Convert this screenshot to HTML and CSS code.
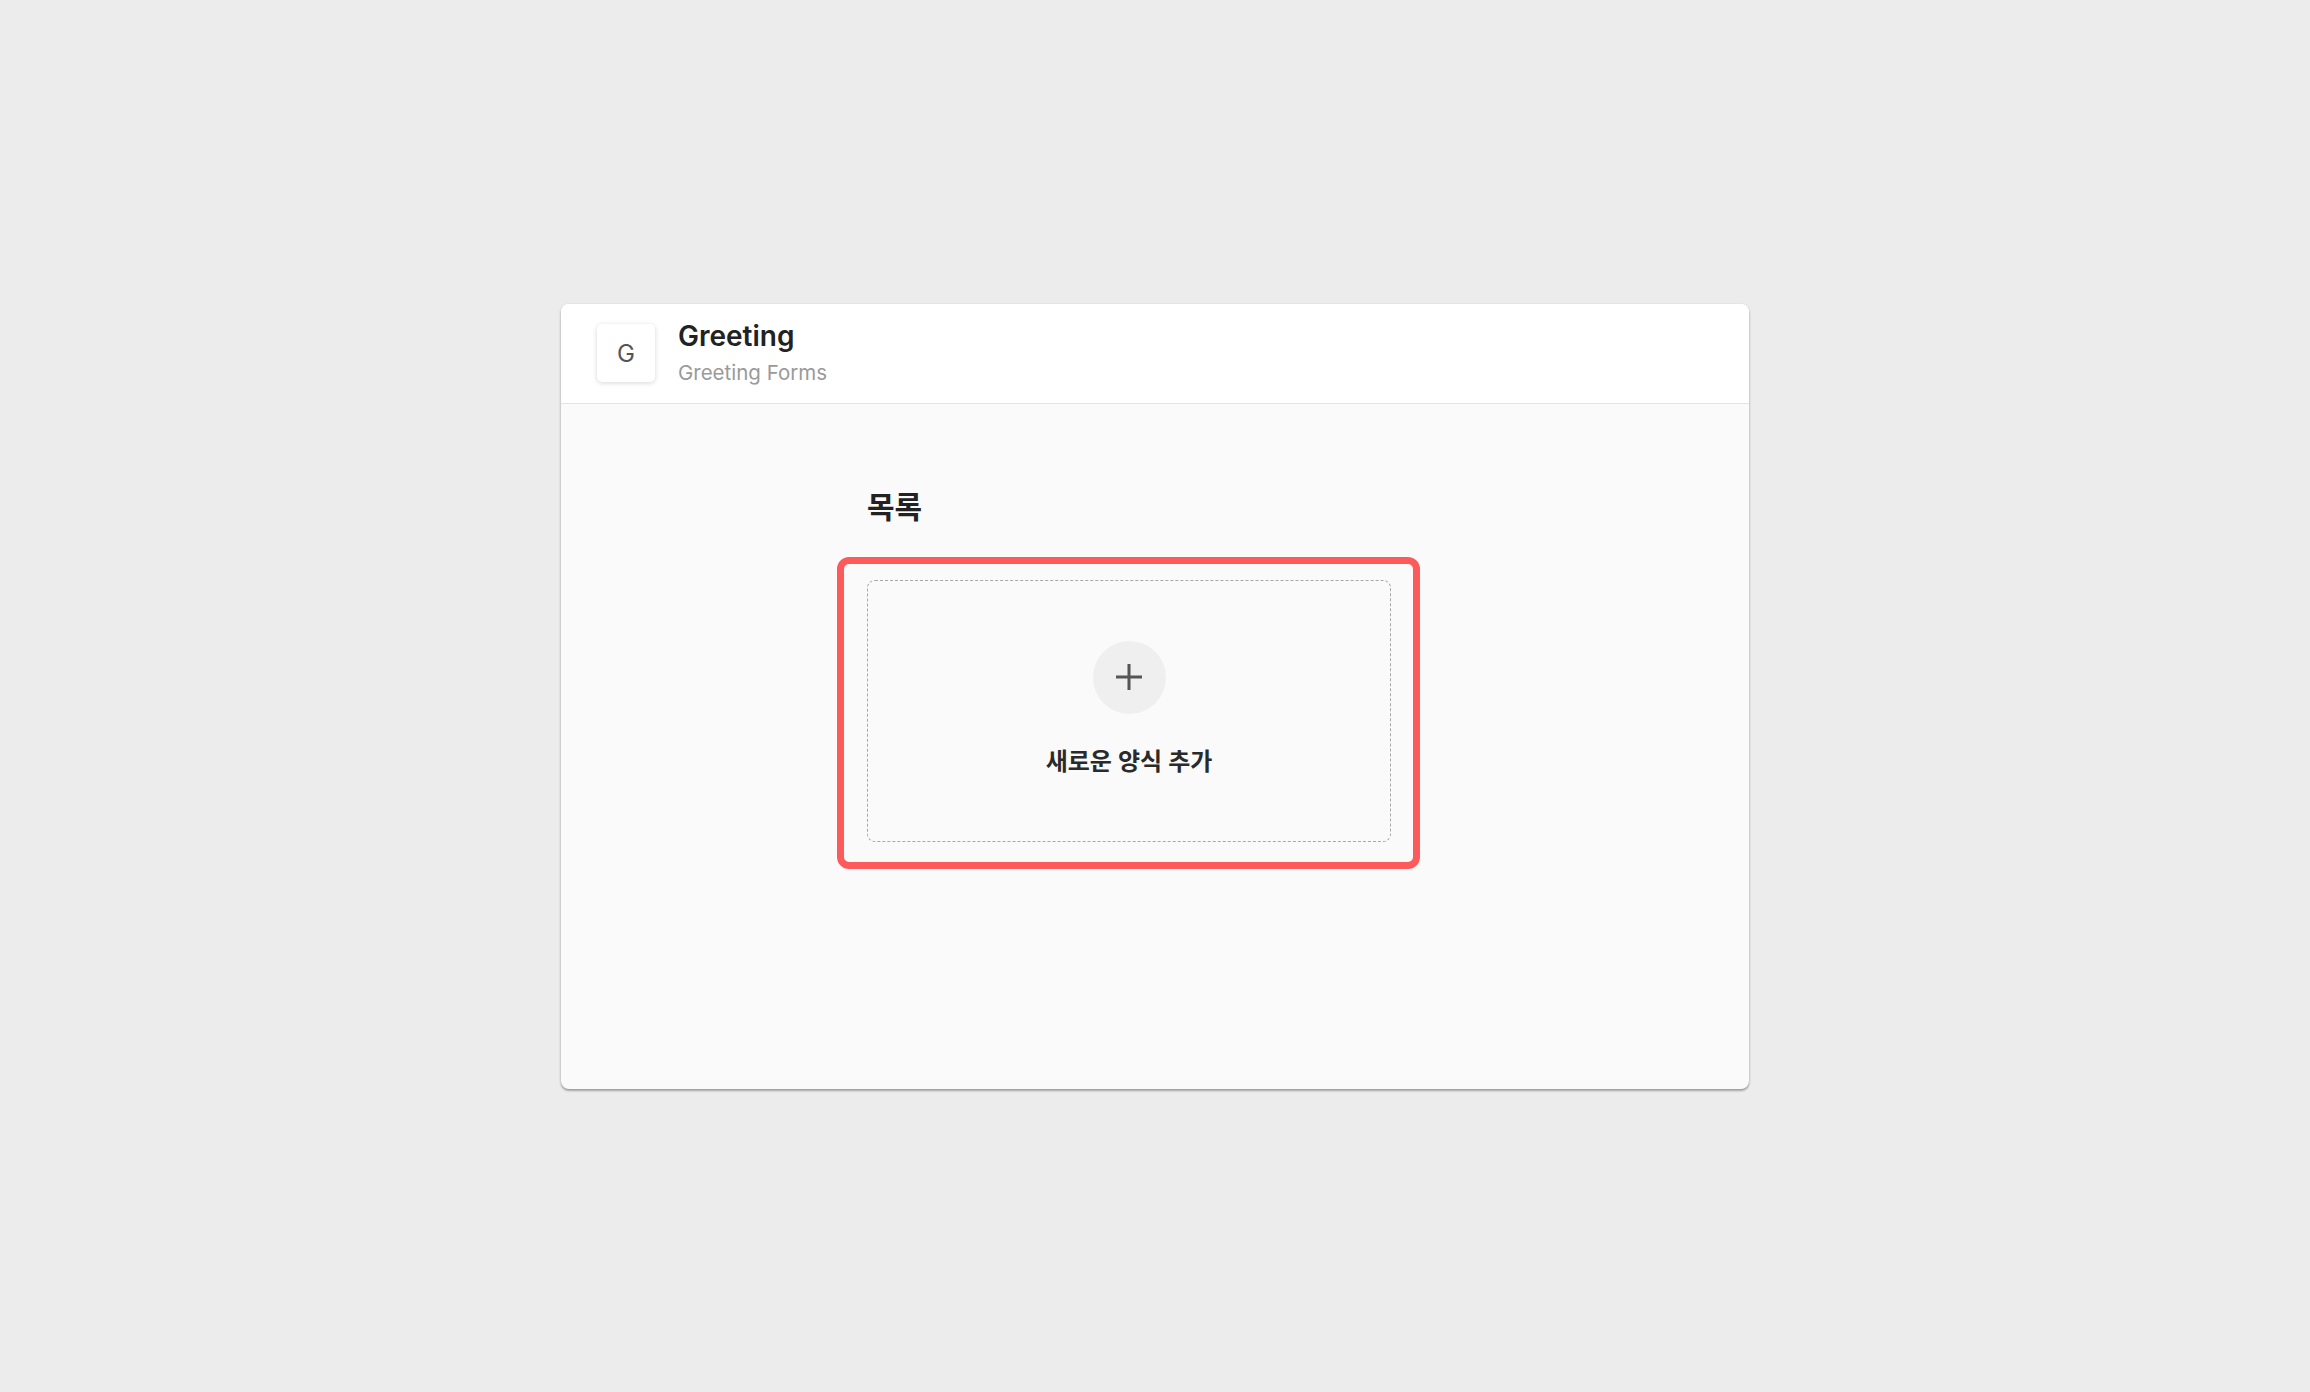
FILE: index.html
```html
<!DOCTYPE html>
<html lang="ko">
<head>
    <meta charset="UTF-8">
    <meta name="viewport" content="width=device-width, initial-scale=1.0">
    <title>Greeting Forms</title>
    <link rel="stylesheet" href="styles.css">
</head>
<body>
    <div class="window">
        <header class="app-header">
            <div class="app-logo">G</div>
            <div class="app-title">
                <h1>Greeting</h1>
                <p>Greeting Forms</p>
            </div>
        </header>

        <main class="content">
            <div class="list">
                <h2>목록</h2>
                <div class="form-grid">
                    <div class="add-card">
                        <div class="add-icon">
                            <svg width="30" height="30" viewBox="0 0 30 30">
                                <path d="M15 2 V28 M2 15 H28" stroke="#555" stroke-width="3" fill="none"/>
                            </svg>
                        </div>
                        <span class="add-label">새로운 양식 추가</span>
                        <div class="highlight"></div>
                    </div>
                </div>
            </div>
        </main>
    </div>
</body>
</html>
```

FILE: styles.css
```css
* {
    box-sizing: border-box;
}

body {
    font-family: Inter, "Noto Sans CJK KR", sans-serif;
    background-color: #ececec;
    margin: 0;
    padding: 0;
    height: 100vh;
    display: flex;
    align-items: center;
    justify-content: center;
    color: #222;
}

.window {
    width: 1188px;
    height: 785px;
    background-color: #fafafa;
    border-radius: 8px;
    box-shadow: 0 1px 3px rgba(0, 0, 0, 0.2), 0 2px 2px rgba(0, 0, 0, 0.22);
    display: flex;
    flex-direction: column;
    overflow: hidden;
}

.app-header {
    height: 100px;
    flex-shrink: 0;
    background-color: #fff;
    border-bottom: 1px solid #e3e3e3;
    display: flex;
    align-items: center;
    gap: 23px;
    padding: 0 36px;
}

.app-logo {
    width: 58px;
    height: 58px;
    border-radius: 5px;
    background-color: #fff;
    box-shadow: 0 1px 5px rgba(0, 0, 0, 0.16);
    display: flex;
    align-items: center;
    justify-content: center;
    font-size: 24px;
    color: #555;
}

.app-title h1 {
    margin: 0;
    font-size: 28px;
    font-weight: 600;
    line-height: 34px;
    color: #222;
}

.app-title p {
    margin: 6px 0 0;
    font-size: 20.5px;
    line-height: 28px;
    color: #9a9a9a;
}

.content {
    flex: 1;
    padding: 86px 306px 0;
}

.list h2 {
    margin: 0 0 56px;
    font-size: 30px;
    font-weight: 700;
    line-height: 34px;
    color: #222;
}

.form-grid {
    display: flex;
    gap: 24px;
}

.add-card {
    position: relative;
    width: 524px;
    height: 262px;
    border: 1px dashed #a8a8a8;
    border-radius: 8px;
    display: flex;
    flex-direction: column;
    align-items: center;
    padding-top: 60px;
    cursor: pointer;
}

.add-icon {
    width: 73px;
    height: 73px;
    border-radius: 50%;
    background-color: #efefef;
    display: flex;
    align-items: center;
    justify-content: center;
}

.add-label {
    margin-top: 33px;
    font-size: 24px;
    font-weight: 600;
    line-height: 30px;
    color: #2a2a2a;
}

/* red focus frame around the add card */
.highlight {
    position: absolute;
    top: -24px;
    left: -31px;
    right: -30px;
    bottom: -28px;
    border: 7px solid #fd5b5b;
    border-radius: 12px;
    pointer-events: none;
}
```
